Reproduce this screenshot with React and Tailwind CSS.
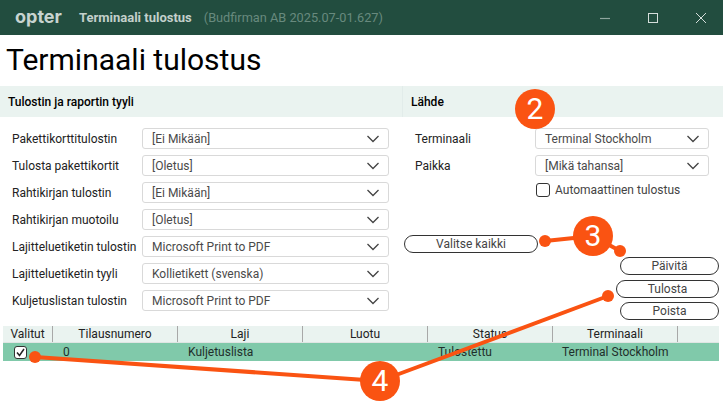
import React from "react";

const leftRows = [
  ["Pakettikorttitulostin", "[Ei Mikään]"],
  ["Tulosta pakettikortit", "[Oletus]"],
  ["Rahtikirjan tulostin", "[Ei Mikään]"],
  ["Rahtikirjan muotoilu", "[Oletus]"],
  ["Lajitteluetiketin tulostin", "Microsoft Print to PDF"],
  ["Lajitteluetiketin tyyli", "Kollietikett (svenska)"],
  ["Kuljetuslistan tulostin", "Microsoft Print to PDF"],
];

const columns = ["Tilausnumero", "Laji", "Luotu", "Status", "Terminaali"];

const Select = ({ value, className }) => (
  <div className={`h-[21px] flex items-center justify-between rounded-[3px] border border-[#d9d9d9] bg-white pl-[9px] pr-[8px] text-[#4a4a4a] ${className}`}>
    <span>{value}</span>
    <svg width="14" height="8" viewBox="0 0 14 8" fill="none" stroke="#444" strokeWidth="1.3">
      <path d="M1.5 1 L7 6.5 L12.5 1" />
    </svg>
  </div>
);

const PillButton = ({ label, className }) => (
  <button className={`h-[18px] flex items-center justify-center rounded-full border border-[#333] bg-white text-[#444] leading-none ${className}`}>
    {label}
  </button>
);

const Annotations = () => (
  <svg className="absolute left-0 top-0 pointer-events-none" width="723" height="408" viewBox="0 0 723 408">
    <g stroke="#fa5312" strokeWidth="4" fill="#fa5312">
      <line x1="545" y1="241" x2="593" y2="236" />
      <line x1="593" y1="236" x2="620" y2="251" />
      <line x1="35" y1="357" x2="380" y2="381" />
      <line x1="608" y1="296" x2="380" y2="381" />
    </g>
    <g fill="#fa5312">
      <circle cx="545" cy="241" r="6" />
      <circle cx="620" cy="251" r="6" />
      <circle cx="35" cy="357" r="6" />
      <circle cx="608" cy="296" r="6" />
      <circle cx="535" cy="109" r="20" />
      <circle cx="593" cy="236" r="20" />
      <circle cx="380" cy="381" r="20" />
    </g>
  </svg>
);

const Badge = ({ n, className }) => (
  <span className={`absolute w-[40px] text-center text-white text-[30px] leading-[40px] ${className}`}>{n}</span>
);

export default function App() {
  return (
    <div className="relative w-[723px] h-[408px] overflow-hidden bg-white text-[12px] text-[#222] font-['Roboto',sans-serif]">
      {/* title bar */}
      <div className="h-[35px] bg-[#224d3f] flex items-center pl-[15px]">
        <span className="w-[64px] text-[18px] font-bold text-[#c8d4d0] leading-none -mt-[2px] font-['Inter',sans-serif]">opter</span>
        <span className="font-bold text-[#c3d0cb] text-[13px]">Terminaali tulostus</span>
        <span className="ml-[12px] text-[#688a7e] text-[12.75px]">(Budfirman AB 2025.07-01.627)</span>
        <div className="ml-auto flex items-center gap-[38px] pr-[17px]">
          <svg width="10" height="10" viewBox="0 0 10 10" stroke="#8fa69e" strokeWidth="1.2"><path d="M0 5.5 H10" /></svg>
          <svg width="10" height="10" viewBox="0 0 10 10" fill="none" stroke="#d5dedb" strokeWidth="1"><rect x="0.5" y="0.5" width="9" height="9" /></svg>
          <svg width="10" height="10" viewBox="0 0 10 10" stroke="#d5dedb" strokeWidth="1"><path d="M0 0 L10 10 M10 0 L0 10" /></svg>
        </div>
      </div>

      <h1 className="h-[51px] pl-[6px] pt-[6px] text-[30px] leading-[37px] text-black">Terminaali tulostus</h1>

      {/* form area */}
      <div className="flex h-[240px]">
        <div className="w-[402px]">
          <div className="h-[31px] bg-[#eaf3f0] flex items-center pl-[8px] font-medium text-[12px] text-black">Tulostin ja raportin tyyli</div>
          <div className="pt-[11px] pl-[12px] pr-[13px] flex flex-col gap-[6px]">
            {leftRows.map(([label, value]) => (
              <div key={label} className="flex items-center">
                <span className="w-[130px]">{label}</span>
                <Select value={value} className="flex-1" />
              </div>
            ))}
          </div>
        </div>
        <div className="flex-1">
          <div className="h-[31px] bg-[#eaf3f0] flex items-center pl-[8px] font-medium text-[12px] text-black border-l border-[#e2ecea]">Lähde</div>
          <div className="pt-[11px] pl-[13px] pr-[14px] flex flex-col gap-[6px]">
            <div className="flex items-center">
              <span className="w-[120px]">Terminaali</span>
              <Select value="Terminal Stockholm" className="flex-1" />
            </div>
            <div className="flex items-center">
              <span className="w-[120px]">Paikka</span>
              <Select value="[Mikä tahansa]" className="flex-1" />
            </div>
            <div className="flex items-center pl-[121px] -mt-[1px]">
              <span className="w-[14px] h-[14px] rounded-[3px] border border-[#333] bg-white" />
              <span className="ml-[5px] text-[#444]">Automaattinen tulostus</span>
            </div>
          </div>
          <div className="pl-[2px] pr-[4px] mt-[36px] flex flex-col items-end">
            <PillButton label="Valitse kaikki" className="w-[134px] self-start" />
            <PillButton label="Päivitä" className="w-[99px] mt-[4px]" />
            <PillButton label="Tulosta" className="w-[103px] mt-[5px]" />
            <PillButton label="Poista" className="w-[99px] mt-[4px]" />
          </div>
        </div>
      </div>

      {/* table */}
      <div className="ml-[3px] w-[716px]">
        <div className="flex h-[17px] bg-[#eaf3f0] border-b border-[#dfe5e3]">
          <div className="w-[50px] flex items-center justify-center border-r border-[#a8a8a8]">Valitut</div>
          {columns.map((c) => (
            <div key={c} className="w-[125px] flex items-center justify-center border-r border-[#a8a8a8]">{c}</div>
          ))}
        </div>
        <div className="flex h-[18px] items-center bg-[#80c9aa] text-[#1f2f2a]">
          <div className="w-[50px] pl-[11px]">
            <span className="w-[13px] h-[13px] flex items-center justify-center rounded-[3px] border border-[#333] bg-white">
              <svg width="9" height="9" viewBox="0 0 9 9" fill="none" stroke="#222" strokeWidth="1.5"><path d="M1 4.5 L3.5 7.5 L8 1" /></svg>
            </span>
          </div>
          <div className="w-[125px] pl-[10px]">0</div>
          <div className="w-[125px] pl-[10px]">Kuljetuslista</div>
          <div className="w-[125px]" />
          <div className="w-[125px] pl-[10px]">Tulostettu</div>
          <div className="w-[125px] pl-[9px]">Terminal Stockholm</div>
        </div>
      </div>

      <Annotations />
      <Badge n="2" className="left-[515px] top-[89px]" />
      <Badge n="3" className="left-[573px] top-[216px]" />
      <Badge n="4" className="left-[360px] top-[361px]" />
    </div>
  );
}
